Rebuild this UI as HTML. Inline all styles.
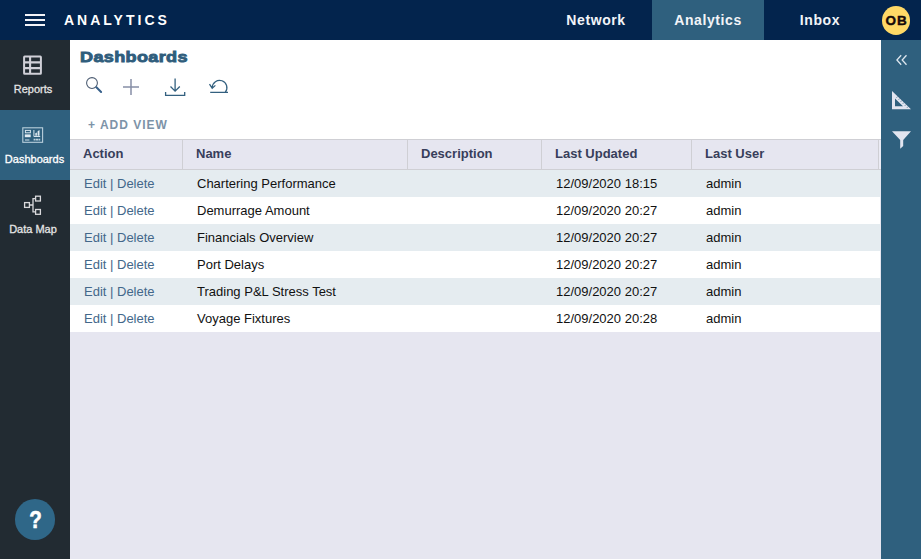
<!DOCTYPE html>
<html><head><meta charset="utf-8">
<style>
*{box-sizing:border-box;margin:0;padding:0}
html,body{width:921px;height:559px;overflow:hidden;background:#e6e6f0;font-family:"Liberation Sans",sans-serif;}
#top{position:absolute;left:0;top:0;width:921px;height:40px;background:#03244d;}
#ham{position:absolute;left:25px;top:14px;width:20px;height:12px}
#ham i{position:absolute;left:0;width:20px;height:2px;background:#f4f4f8}
#brand{position:absolute;left:64px;top:12px;font-size:14px;font-weight:bold;color:#fff;letter-spacing:3px;line-height:16px}
.tab{position:absolute;top:0;height:40px;line-height:40px;color:#f2f4f8;font-weight:bold;font-size:14px;letter-spacing:.6px;text-align:center}
#t1{left:540px;width:112px}
#t2{left:652px;width:112px;background:#2f607e}
#t3{left:764px;width:112px}
#av{position:absolute;left:881.8px;top:6px;width:28.6px;height:29px;border-radius:50%;background:#ffd966;color:#160a0a;font-weight:bold;font-size:13.5px;line-height:29px;text-align:center;letter-spacing:.9px;text-indent:1px;-webkit-text-stroke:.4px #160a0a}
#left{position:absolute;left:0;top:40px;width:70px;height:519px;background:#222b32}
.nav{position:absolute;left:0;width:70px;height:70px;color:#e4e4e4;font-size:11px;text-align:center}
.nav span{position:absolute;left:-7px;width:80px;top:42px;line-height:14px;-webkit-text-stroke:.3px currentColor}
.nav svg{position:absolute}
#n2{background:#2f607e;color:#fff}
#help{position:absolute;left:15px;top:459.3px;width:40.2px;height:40.4px;border-radius:50%;background:#2f6788;color:#fff;font-weight:bold;font-size:24.5px;line-height:41.4px;text-align:center;-webkit-text-stroke:.6px #fff}
#right{position:absolute;left:881px;top:40px;width:40px;height:519px;background:#2f607e}
#white{position:absolute;left:70px;top:40px;width:811px;height:99px;background:#fff}
#title{position:absolute;left:80.3px;top:45.5px;font-size:15.5px;font-weight:bold;color:#2f5d7c;letter-spacing:.3px;line-height:22px;-webkit-text-stroke:.9px #2f5d7c;transform-origin:0 50%;transform:scaleX(1.165);white-space:nowrap}
#addv{position:absolute;left:88px;top:118px;font-size:12px;font-weight:bold;color:#7d93a8;letter-spacing:1px;line-height:14px}
#tbl{position:absolute;left:70px;top:139px;width:811px;}
#hdr{height:31px;border-top:1px solid #cfcfd4;border-bottom:1px solid #cfcfd4;background:#ebebf4;position:relative}
#hdr div{position:absolute;top:0;height:29px;background:#e6e6f0;line-height:28px;font-weight:bold;font-size:13px;color:#383e5b;border-right:1px solid #cfcfd4;padding-left:13px}
.row{width:809.6px;height:27px;position:relative;font-size:13px;line-height:27px;color:#111}
.row.o{background:#e5ecf0}
.row.e{background:#fff}
.row span{position:absolute;top:0}
.a{left:14px;color:#43678a}
.n{left:127px}
.d{left:486px}
.u{left:636px}
</style></head><body>
<div id="top">
 <div id="ham"><i style="top:0"></i><i style="top:5px"></i><i style="top:10px"></i></div>
 <div id="brand">ANALYTICS</div>
 <div class="tab" id="t1">Network</div><div class="tab" id="t2">Analytics</div><div class="tab" id="t3">Inbox</div>
 <div id="av">OB</div>
</div>
<div id="left">
 <div class="nav" id="n1" style="top:0"><svg style="left:0;top:0" width="70" height="70" viewBox="0 40 70 70" fill="none" stroke="#d0d0d8" stroke-width="2"><rect x="24.1" y="56.6" width="16.8" height="17.2" rx=".6"/><path d="M24 62.4H41M24 68.1H41M30.1 56.5V74" stroke-width="2.1"/></svg><span>Reports</span></div>
 <div class="nav" id="n2" style="top:70px;"><svg style="left:0;top:0" width="70" height="70" viewBox="0 110 70 70" fill="none" stroke="#d5e3ec" stroke-width="1"><rect x="22.8" y="127.8" width="19.8" height="14.5" stroke="#b9cfdc" stroke-width="1.1"/><rect x="25.4" y="130.4" width="5" height="2.4"/><rect x="24.8" y="134.4" width="5.9" height="2.8" fill="#e2ecf2" stroke="none"/><path d="M25 140H29.4M33.9 130V136.5H40.2"/><path d="M35.3 135.7V133.3L36.9 132.4V135.7ZM37.6 135.7V131.3L39.5 129.9V135.7Z" fill="#dfe9f0" stroke="none"/><path d="M33.6 139.6H35.6M36 139.6H38M38.4 139.6H40.2" stroke-width="1.8" stroke="#bcd0dc"/></svg><span style="left:-5.5px">Dashboards</span></div>
 <div class="nav" id="n3" style="top:140px"><svg style="left:0;top:0" width="70" height="70" viewBox="0 180 70 70" fill="none" stroke="#d9d9dc" stroke-width="1.3"><rect x="24.6" y="202.6" width="4.8" height="4.8"/><rect x="35.6" y="196.2" width="4.8" height="4.8"/><rect x="35.6" y="209.5" width="4.8" height="4.8"/><path d="M29.5 205H33M35.5 198.6H33V211.9H35.5"/></svg><span>Data Map</span></div>
 <div id="help"><b style="display:inline-block;transform:scaleX(.84)">?</b></div>
</div>
<div id="white"></div>
<div id="title">Dashboards</div>
<svg id="tools" style="position:absolute;left:70px;top:65px" width="180" height="45" viewBox="70 65 180 45" fill="none">
<circle cx="92" cy="83" r="5.4" stroke="#4a5a70" stroke-width="1.05"/><path d="M96.4 87.2L101.1 92" stroke="#37608a" stroke-width="2" stroke-linecap="round"/>
<path d="M123 87H139M131 79V95" stroke="#868fa6" stroke-width="1.5"/>
<path d="M175.1 78.5V91M170.5 86.5L175.1 91.2L179.8 86.5M165.6 92V95.3H184.7V92" stroke="#33607f" stroke-width="1.3"/>
<path d="M210.2 92.3H228M225.3 92.2A7.3 7.3 0 1 0 212.3 87.6M209.5 84.2L212.2 88.2L215.4 85.4" stroke="#33607f" stroke-width="1.25"/>
</svg>
<div id="addv">+ ADD VIEW</div>
<div id="tbl">
 <div id="hdr">
  <div style="left:0;width:113px">Action</div>
  <div style="left:113px;width:225px">Name</div>
  <div style="left:338px;width:134px">Description</div>
  <div style="left:472px;width:150px">Last Updated</div>
  <div style="left:622px;width:187px">Last User</div>
 </div>
 <div class="row o"><span class="a">Edit | Delete</span><span class="n">Chartering Performance</span><span class="d">12/09/2020 18:15</span><span class="u">admin</span></div>
 <div class="row e"><span class="a">Edit | Delete</span><span class="n">Demurrage Amount</span><span class="d">12/09/2020 20:27</span><span class="u">admin</span></div>
 <div class="row o"><span class="a">Edit | Delete</span><span class="n">Financials Overview</span><span class="d">12/09/2020 20:27</span><span class="u">admin</span></div>
 <div class="row e"><span class="a">Edit | Delete</span><span class="n">Port Delays</span><span class="d">12/09/2020 20:27</span><span class="u">admin</span></div>
 <div class="row o"><span class="a">Edit | Delete</span><span class="n">Trading P&amp;L Stress Test</span><span class="d">12/09/2020 20:27</span><span class="u">admin</span></div>
 <div class="row e"><span class="a">Edit | Delete</span><span class="n">Voyage Fixtures</span><span class="d">12/09/2020 20:28</span><span class="u">admin</span></div>
</div>
<div id="right"><svg style="position:absolute;left:0;top:0" width="40" height="120" viewBox="881 40 40 120">
<path d="M901.2 55.2L896.9 60L901.2 64.8M906.5 55.2L902.2 60L906.5 64.8" fill="none" stroke="#dde6ee" stroke-width="1.3"/>
<path d="M892 91V109.3H911ZM895 98.6V106.3H903Z" fill="#e2e5f0" fill-rule="evenodd"/><path d="M897.70 96.49l-1.18 1.22M899.79 98.50l-1.18 1.22M901.88 100.52l-1.18 1.22M903.97 102.53l-1.18 1.22M906.06 104.54l-1.18 1.22M908.15 106.56l-1.18 1.22" stroke="#2f607e" stroke-width=".7" fill="none"/>
<path d="M892 131.2H911L903.2 140V146L900.2 148.7V140Z" fill="#e2e5f0"/>
</svg></div>
</body></html>
